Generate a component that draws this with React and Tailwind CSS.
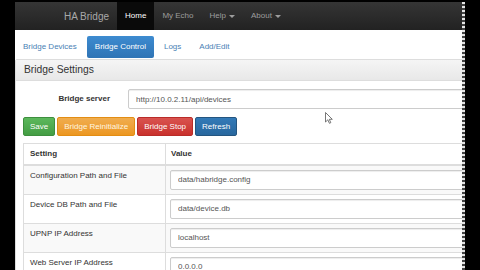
import React from 'react';

const rows = [
  { label: 'Configuration Path and File', value: 'data/habridge.config' },
  { label: 'Device DB Path and File', value: 'data/device.db' },
  { label: 'UPNP IP Address', value: 'localhost' },
  { label: 'Web Server IP Address', value: '0.0.0.0' },
];

const Caret = () => (
  <span className="inline-block w-0 h-0 ml-[3px] border-x-[3px] border-x-transparent border-t-[3px] border-t-[#9d9d9d] align-middle" />
);

const App = () => {
  return (
    <div className="relative w-[480px] h-[270px] bg-black flex pt-[2px] overflow-hidden font-['Liberation_Sans',Arial,sans-serif] text-[8px] text-[#333]">
      <div className="w-[15px] shrink-0" />
      <div className="w-[447px] shrink-0 bg-white overflow-hidden">
        <div className="w-[560px]">
          {/* navbar */}
          <div className="h-[28px] flex items-stretch pl-[41px] bg-gradient-to-b from-[#353535] to-[#222]">
            <div className="px-[8px] flex items-center text-[10px] text-[#a8a8a8]">HA Bridge</div>
            <div className="px-[8px] flex items-center text-white bg-[#0a0a0a]">Home</div>
            <div className="px-[8px] flex items-center text-[#9d9d9d]">My Echo</div>
            <div className="px-[8px] flex items-center text-[#9d9d9d]">
              Help <Caret />
            </div>
            <div className="px-[8px] flex items-center text-[#9d9d9d]">
              About <Caret />
            </div>
          </div>

          {/* tabs */}
          <div className="mt-[6px] flex gap-[2px] h-[22px]">
            <div className="px-[8px] flex items-center text-[#4a7fb5]">Bridge Devices</div>
            <div className="px-[8px] flex items-center text-white rounded-[2px] bg-gradient-to-b from-[#3d8bd0] to-[#2f74b5]">
              Bridge Control
            </div>
            <div className="px-[8px] flex items-center text-[#4a7fb5]">Logs</div>
            <div className="px-[8px] flex items-center text-[#4a7fb5]">Add/Edit</div>
          </div>

          {/* panel */}
          <div className="mt-[1px] border border-[#ddd] rounded-t-[2px]">
            <div className="h-[21px] px-[8px] flex items-center text-[10.3px] text-[#333] bg-gradient-to-b from-[#f5f5f5] to-[#e8e8e8] border-b border-[#ddd]">
              Bridge Settings
            </div>
            <div className="px-[7px] pt-[8px]">
              <div className="flex items-center h-[20px]">
                <label className="w-[87px] text-right font-bold">Bridge server</label>
                <input
                  readOnly
                  value="http://10.0.2.11/api/devices"
                  className="ml-[18px] flex-1 h-[20px] px-[7px] border border-[#ccc] rounded-[2px] text-[#555] shadow-[inset_0_1px_1px_rgba(0,0,0,0.075)] outline-none"
                />
              </div>

              <div className="mt-[8px] flex gap-[2px]">
                <button className="h-[19px] px-[6px] rounded-[2px] text-white border border-[#3e8f3e] bg-gradient-to-b from-[#5cb85c] to-[#449d44]">
                  Save
                </button>
                <button className="h-[19px] px-[6px] rounded-[2px] text-[#fff6e0] border border-[#e38d13] bg-gradient-to-b from-[#f0ad4e] to-[#ec971f]">
                  Bridge Reinitialize
                </button>
                <button className="h-[19px] px-[6px] rounded-[2px] text-white border border-[#b92c28] bg-gradient-to-b from-[#d9534f] to-[#c9302c]">
                  Bridge Stop
                </button>
                <button className="h-[19px] px-[6px] rounded-[2px] text-white border border-[#245580] bg-gradient-to-b from-[#337ab7] to-[#28679e]">
                  Refresh
                </button>
              </div>

              <table className="mt-[7px] w-[530px] border-collapse">
                <thead>
                  <tr>
                    <th className="w-[142px] h-[21px] px-[6px] text-left font-bold border border-[#ddd] border-b-2">Setting</th>
                    <th className="h-[21px] px-[5px] text-left font-bold border border-[#ddd] border-b-2">Value</th>
                  </tr>
                </thead>
                <tbody>
                  {rows.map((row, i) => (
                    <tr key={row.label} className={i % 2 === 0 ? 'bg-[#f9f9f9]' : 'bg-white'}>
                      <td className="h-[29px] px-[6px] pt-[4px] align-top border border-[#ddd]">{row.label}</td>
                      <td className="h-[29px] px-[4px] py-[4px] align-top border border-[#ddd]">
                        <input
                          readOnly
                          value={row.value}
                          className="w-full h-[20px] px-[7px] border border-[#ccc] rounded-[2px] bg-white text-[#555] shadow-[inset_0_1px_1px_rgba(0,0,0,0.075)] outline-none"
                        />
                      </td>
                    </tr>
                  ))}
                </tbody>
              </table>
            </div>
          </div>
        </div>
      </div>
      <div className="w-[3px] shrink-0 bg-[repeating-linear-gradient(180deg,#e4e4e4_0px,#e4e4e4_2px,#444_2px,#444_4px)]" />

      {/* mouse pointer */}
      <svg className="absolute left-[325px] top-[112px]" width="8" height="12" viewBox="0 0 8 12">
        <path d="M0.5 0.5 L0.5 10 L2.8 7.8 L4.4 11.3 L5.8 10.7 L4.3 7.3 L7.3 7.3 Z" fill="#fff" stroke="#555" strokeWidth="0.8" />
      </svg>
    </div>
  );
};

export default App;
